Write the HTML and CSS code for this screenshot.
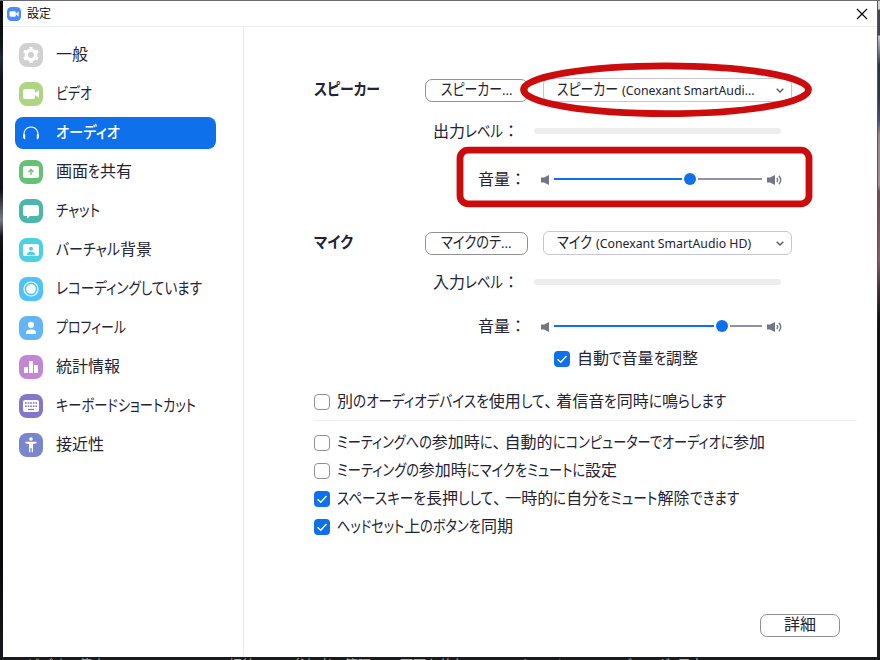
FILE: index.html
```
<!DOCTYPE html>
<html lang="ja">
<head>
    <meta charset="UTF-8">
    <meta name="viewport" content="width=device-width, initial-scale=1.0">
    <title>設定</title>
    <link rel="stylesheet" href="styles.css">
</head>
<body>
    <div class="window">
        <header class="titlebar">
            <svg class="app-logo" viewBox="0 0 14 14">
                <rect width="14" height="14" rx="4.5" fill="#4a8cff"/>
                <rect x="2.5" y="4.3" width="6.3" height="5.4" rx="1.3" fill="#fff"/>
                <path d="M9.2 6.3 11.6 4.6V9.4L9.2 7.7z" fill="#fff"/>
            </svg>
            <span class="title">設定</span>
            <svg class="close" viewBox="0 0 12 12"><path d="M1 1 11 11M11 1 1 11" stroke="#000" stroke-width="1.2"/></svg>
        </header>
        <div class="main">
            <nav class="sidebar">
                <a class="nav-item">
                    <svg class="nav-icon" viewBox="0 0 24 24">
                        <rect width="24" height="24" rx="8" fill="#d1d1d1"/>
                        <circle cx="12" cy="12" r="4.7" fill="none" stroke="#fff" stroke-width="3.4"/>
                        <path d="M12 4V7M12 17v3M5 8l3 1.7M16 14.3l3 1.7M5 16l3-1.7M16 9.7 19 8" stroke="#fff" stroke-width="3.4"/>
                    </svg>
                    <span class="nav-text">一般</span>
                </a>
                <a class="nav-item">
                    <svg class="nav-icon" viewBox="0 0 24 24">
                        <rect width="24" height="24" rx="8" fill="#aed581"/>
                        <rect x="4" y="7" width="12" height="10" rx="2" fill="#fff"/>
                        <path d="M16 11 20 8V16L16 13z" fill="#fff"/>
                    </svg>
                    <span class="nav-text" data-width="36">ビデオ</span>
                </a>
                <a class="nav-item active">
                    <svg class="nav-icon" viewBox="0 0 24 24">
                        <path d="M5.3 17C3.8 10.5 7 6 12 6s8.2 4.500 6.700 11" fill="none" stroke="#fff" stroke-width="1.1"/>
                        <path d="M4.1 13.2h2.100v5H5.200Q4 18 4 15zM19.900 13.200h-2.100v5h1Q20 18 20 15z" fill="#fff"/>
                    </svg>
                    <span class="nav-text" data-width="64">オーディオ</span>
                </a>
                <a class="nav-item">
                    <svg class="nav-icon" viewBox="0 0 24 24">
                        <rect width="24" height="24" rx="8" fill="#66c174"/>
                        <rect x="4" y="6" width="16" height="12" rx="2" fill="#fff"/>
                        <path d="M12 15V10M9.5 12 12 9.500 14.500 12" fill="none" stroke="#66c174" stroke-width="1.3"/>
                    </svg>
                    <span class="nav-text" data-width="76">画面を共有</span>
                </a>
                <a class="nav-item">
                    <svg class="nav-icon" viewBox="0 0 24 24">
                        <rect width="24" height="24" rx="8" fill="#4db6ac"/>
                        <path d="M6.5 6h11Q20 6 20 8.500v6Q20 17 17.500 17H11L8.500 19.500 8 17H6.500Q4 17 4 14.500v-6Q4 6 6.500 6z" fill="#fff"/>
                    </svg>
                    <span class="nav-text" data-width="44">チャット</span>
                </a>
                <a class="nav-item">
                    <svg class="nav-icon" viewBox="0 0 24 24">
                        <rect width="24" height="24" rx="8" fill="#4dd0e1"/>
                        <rect x="4" y="6" width="16" height="12" rx="2" fill="#fff"/>
                        <circle cx="12" cy="10.8" r="2" fill="#4dd0e1"/>
                        <path d="M8 17q0-3.2 4-3.200t4 3.200z" fill="#4dd0e1"/>
                    </svg>
                    <span class="nav-text" data-width="96">バーチャル背景</span>
                </a>
                <a class="nav-item">
                    <svg class="nav-icon" viewBox="0 0 24 24">
                        <rect width="24" height="24" rx="8" fill="#4fc3f7"/>
                        <circle cx="12" cy="12" r="7" fill="none" stroke="#fff" stroke-width="1.2"/>
                        <circle cx="12" cy="12" r="4.8" fill="#fff"/>
                    </svg>
                    <span class="nav-text" data-width="146">レコーディングしています</span>
                </a>
                <a class="nav-item">
                    <svg class="nav-icon" viewBox="0 0 24 24">
                        <rect width="24" height="24" rx="8" fill="#64b5f6"/>
                        <circle cx="12" cy="8.8" r="3.1" fill="#fff"/>
                        <path d="M7 18v-1.2q0-3.300 5-3.300t5 3.300V18z" fill="#fff"/>
                    </svg>
                    <span class="nav-text" data-width="70">プロフィール</span>
                </a>
                <a class="nav-item">
                    <svg class="nav-icon" viewBox="0 0 24 24">
                        <rect width="24" height="24" rx="8" fill="#c286d4"/>
                        <path d="M5 12h4v6H5zM10 6h4v12h-4zM15 10h4v8h-4z" fill="#fff"/>
                    </svg>
                    <span class="nav-text">統計情報</span>
                </a>
                <a class="nav-item">
                    <svg class="nav-icon" viewBox="0 0 24 24">
                        <rect width="24" height="24" rx="8" fill="#8476c9"/>
                        <rect x="4" y="6" width="16" height="12" rx="2" fill="#fff"/>
                        <path d="M6 9h12M6 12.2h12" stroke="#8476c9" stroke-width="1.5" stroke-dasharray="1.7 .9"/>
                        <path d="M9 15.5h6" stroke="#8476c9" stroke-width="1.2"/>
                    </svg>
                    <span class="nav-text" data-width="140">キーボードショートカット</span>
                </a>
                <a class="nav-item">
                    <svg class="nav-icon" viewBox="0 0 24 24">
                        <rect width="24" height="24" rx="8" fill="#7986cb"/>
                        <circle cx="12" cy="6" r="1.8" fill="#fff"/>
                        <path d="M6.5 8.700h11v1.600L14 11v8.300h-1.300V15h-1.400v4.300H10V11l-3.500-.7z" fill="#fff"/>
                    </svg>
                    <span class="nav-text">接近性</span>
                </a>
            </nav>

            <section class="content">
                <div class="device">
                    <h2><span data-width="66">スピーカー</span></h2>
                    <button class="btn"><span data-width="61">スピーカー</span><span class="dots">...</span></button>
                    <div class="select"><span data-width="61">スピーカー</span><span class="model">(Conexant SmartAudi...</span>
                        <svg class="chevron" viewBox="0 0 8 5"><path d="M.7.7 4 4 7.3.7" fill="none" stroke="#555566" stroke-width="1.3"/></svg>
                    </div>
                </div>
                <div class="level"><span class="label"><span data-width="70">出力レベル</span>：</span><div class="meter"></div></div>
                <div class="volume">
                    <span class="label">音量：</span>
                    <svg class="vol-low" viewBox="0 0 8 10"><path d="M0 2.5h3L8 0v10L3 7.500H0z" fill="#747487"/></svg>
                    <div class="slider"><div class="fill" style="width: 128px"></div><div class="thumb"></div><div class="rest"></div></div>
                    <svg class="vol-high" viewBox="0 0 15 12"><path d="M0 3.5h3L8 1v10L3 8.500H0z" fill="#747487"/><path d="M9.8 4q1.700 2 0 4M11.900 1.700q3.600 4.300 0 8.600" fill="none" stroke="#747487" stroke-width="1.4"/></svg>
                </div>

                <div class="device mic">
                    <h2><span data-width="39">マイク</span></h2>
                    <button class="btn"><span data-width="60">マイクのテ</span><span class="dots">...</span></button>
                    <div class="select"><span data-width="35">マイク</span><span class="model">(Conexant SmartAudio HD)</span>
                        <svg class="chevron" viewBox="0 0 8 5"><path d="M.7.7 4 4 7.3.7" fill="none" stroke="#555566" stroke-width="1.3"/></svg>
                    </div>
                </div>
                <div class="level mic-level"><span class="label"><span data-width="70">入力レベル</span>：</span><div class="meter"></div></div>
                <div class="volume mic-volume">
                    <span class="label">音量：</span>
                    <svg class="vol-low" viewBox="0 0 8 10"><path d="M0 2.5h3L8 0v10L3 7.500H0z" fill="#747487"/></svg>
                    <div class="slider"><div class="fill" style="width: 160px"></div><div class="thumb"></div><div class="rest"></div></div>
                    <svg class="vol-high" viewBox="0 0 15 12"><path d="M0 3.5h3L8 1v10L3 8.500H0z" fill="#747487"/><path d="M9.8 4q1.700 2 0 4M11.900 1.700q3.600 4.300 0 8.600" fill="none" stroke="#747487" stroke-width="1.4"/></svg>
                </div>
                <label class="check auto">
                    <svg class="box on" viewBox="0 0 16 16"><path d="M3.5 8.2 6.7 11.2 12.5 5"/></svg>
                    <span class="check-text" data-width="121">自動で音量を調整</span>
                </label>

                <div class="options ring">
                    <label class="check"><span class="box"></span><span class="check-text" data-width="389">別のオーディオデバイスを使用して、着信音を同時に鳴らします</span></label>
                </div>
                <div class="options">
                    <label class="check"><span class="box"></span><span class="check-text" data-width="428">ミーティングへの参加時に、自動的にコンピューターでオーディオに参加</span></label>
                    <label class="check"><span class="box"></span><span class="check-text" data-width="280">ミーティングの参加時にマイクをミュートに設定</span></label>
                    <label class="check"><svg class="box on" viewBox="0 0 16 16"><path d="M3.5 8.2 6.7 11.2 12.5 5"/></svg><span class="check-text" data-width="402">スペースキーを長押しして、一時的に自分をミュート解除できます</span></label>
                    <label class="check"><svg class="box on" viewBox="0 0 16 16"><path d="M3.5 8.2 6.7 11.2 12.5 5"/></svg><span class="check-text" data-width="176">ヘッドセット上のボタンを同期</span></label>
                </div>
                <button class="btn advanced">詳細</button>
            </section>
        </div>
    </div>

    <!-- meeting toolbar showing below the window -->
    <div class="toolbar">
        <span class="tool-video">ビデオの停止</span>
        <span class="tool-invite">招待</span>
        <span class="tool-people">参加者の管理</span>
        <span class="tool-share">画面を共有</span>
        <span class="tool-chat">チャット</span>
        <span class="tool-record">レコーディング</span>
        <span class="tool-react">反応</span>
    </div>

    <svg class="marks" viewBox="0 0 880 660">
        <ellipse cx="666" cy="89.8" rx="142.5" ry="23.9"/>
        <rect x="460" y="150.2" width="349" height="53.6" rx="8"/>
    </svg>
    <script src="kana.js"></script>
</body>
</html>
```

FILE: kana.js
```
// Condense the kana runs of a label so that it fits its data-width; kanji keep their width
document.querySelectorAll('[data-width]').forEach(label => {
    const runs = label.textContent.match(/[ぁ-んァ-ヶー]+|、|[^ぁ-んァ-ヶー、]+/g);
    label.textContent = '';
    let kana = 0;
    let rest = 0;

    const spans = runs.map(run => {
        const span = document.createElement('span');
        span.textContent = run;
        span.className = run === '、' ? 'comma' : /^[ぁ-んァ-ヶー]/.test(run) ? 'kana' : 'kanji';
        label.appendChild(span);
        return span;
    });

    const widths = spans.map(span => span.getBoundingClientRect().width);
    spans.forEach((span, i) => {
        if (span.className === 'kana') kana += widths[i];
        else rest += widths[i];
    });

    const scale = (Number(label.dataset.width) - rest) / kana;
    spans.forEach((span, i) => {
        if (span.className !== 'kana') return;
        span.style.width = widths[i] * scale + 'px';
        span.style.transform = `scaleX(${scale})`;
    });
});
```

FILE: styles.css
```
* {
    box-sizing: border-box;
}
body {
    margin: 0;
    width: 880px;
    height: 660px;
    overflow: hidden;
    position: relative;
    padding: 1px 3px 0;
    background: linear-gradient(#6b6b70, #6b6b70) 0 0 / 880px 1px no-repeat,
        linear-gradient(#08080a 0, #10141c 45px, #1c2a38 58px, #10141c 80px, #101116 190px, #777b85 220px, #16171b 236px, #08080a 260px, #08080a 560px, #18191c 660px) 0 0 / 3px 660px no-repeat,
        linear-gradient(#55555a 0, #55555a 270px, #1b1b1d 330px, #1b1c1e 660px) 877px 0 / 1px 660px no-repeat,
        linear-gradient(#d5d5d8 0, #d5d5d8 9px, #45454b 10px, #45454b 35px, #c5c8cc 36px, #8b9096 48px, #2c3440 65px, #303848 100px, #46506c 120px, #96888f 135px, #a09095 185px, #6d4c54 192px, #805f66 260px, #3c3034 290px, #111 320px, #161416 620px, #1b1c1e 660px) 878px 0 / 2px 660px no-repeat,
        #191b1c;
    font-family: "Noto Sans CJK JP", sans-serif;
    font-size: 16px;
    color: #232333;
}
.kana {
    display: inline-block;
    white-space: nowrap;
    transform-origin: 0 50%;
    font-feature-settings: "palt";
}
.comma {
    letter-spacing: -4px;
}
.window {
    width: 874px;
    height: 656px;
    background: #fff;
    display: flex;
    flex-direction: column;
}
.titlebar {
    height: 26px;
    border-bottom: 1px solid #ededf4;
    display: flex;
    align-items: center;
    padding: 0 9px 0 4px;
    color: #000;
}
.app-logo {
    width: 14px;
    height: 14px;
}
.title {
    margin-left: 6px;
    padding-bottom: 2px;
    font-size: 12px;
    font-weight: 350;
    line-height: 22px;
}
.close {
    width: 12px;
    height: 12px;
    margin-left: auto;
}
.main {
    flex: 1;
    display: flex;
}
.sidebar {
    width: 241px;
    border-right: 1px solid #ededed;
    padding: 12px 0 0 12px;
    display: flex;
    flex-direction: column;
    gap: 7px;
}
.nav-item {
    width: 201px;
    height: 32px;
    flex-shrink: 0;
    border-radius: 8px;
    display: flex;
    align-items: center;
    padding-left: 4px;
    white-space: nowrap;
}
.nav-text {
    margin-left: 13px;
    line-height: 28px;
    height: 32px;
}
.nav-icon {
    width: 24px;
    height: 24px;
    flex-shrink: 0;
}
.active {
    background: #0e71eb;
    color: #fff;
    font-weight: 500;
}
.content {
    flex: 1;
    padding: 51px 20px 0 70px;
    display: flex;
    flex-direction: column;
    white-space: nowrap;
}
.device {
    height: 24px;
    display: flex;
    flex-shrink: 0;
    align-items: flex-end;
}
h2 {
    margin: 0;
    width: 111px;
    height: 24px;
    font-size: 16px;
    font-weight: 700;
    line-height: 20px;
}
.btn {
    width: 103px;
    height: 23px;
    padding: 0 0 0 15px;
    display: flex;
    align-items: flex-start;
    border: 1px solid #909096;
    border-radius: 7px;
    background: #fff;
    color: #232333;
    font: inherit;
    line-height: 17px;
    white-space: nowrap;
}
.dots {
    font-family: "Noto Sans", sans-serif;
    font-size: 13px;
    line-height: 20px;
}
.select {
    width: 249px;
    height: 24px;
    margin-left: 15px;
    border: 1px solid #c6c6d8;
    border-radius: 6px;
    padding: 0 7px 0 13px;
    display: flex;
    align-items: flex-start;
    line-height: 19px;
}
.model {
    font-family: "Noto Sans", sans-serif;
    font-size: 12.3px;
    margin-left: 4px;
    line-height: 23px;
}
.chevron {
    width: 8px;
    height: 5px;
    margin: 9px 0 0 auto;
}
.level {
    height: 20px;
    margin-top: 19px;
    display: flex;
    flex-shrink: 0;
    align-items: center;
    padding-left: 119px;
}
.level .label {
    width: 101px;
}
.label {
    height: 20px;
    line-height: 18px;
}
.meter {
    width: 247px;
    height: 6px;
    border-radius: 3px;
    background: #ededed;
}
.volume {
    height: 20px;
    margin-top: 28px;
    display: flex;
    flex-shrink: 0;
    align-items: center;
    padding-left: 164px;
}
.volume .label {
    width: 63px;
}
.vol-low {
    width: 8px;
    height: 10px;
    margin: 2px 5px 0 0;
}
.slider {
    width: 208px;
    display: flex;
    align-items: center;
}
.fill {
    height: 2px;
    background: #0e71eb;
}
.thumb {
    width: 12px;
    height: 12px;
    border-radius: 50%;
    background: #0e71eb;
    margin: 0 2px;
}
.rest {
    flex: 1;
    height: 2px;
    background: #9090ac;
}
.vol-high {
    width: 15px;
    height: 12px;
    margin: 2px 0 0 5px;
}
.mic {
    margin-top: 42px;
}
.mic-level {
    margin-top: 17px;
}
.mic-volume {
    margin-top: 24px;
}
.check {
    height: 16px;
    display: flex;
    align-items: center;
}
.box {
    width: 16px;
    height: 16px;
    flex-shrink: 0;
    border: 1px solid #909096;
    border-radius: 4px;
    margin-right: 7px;
}
.box.on {
    border: 0;
    background: #0e71eb;
    fill: none;
    stroke: #fff;
    stroke-width: 1.4;
}
.check-text {
    height: 16px;
    line-height: 13px;
}
.auto {
    margin: 15px 0 0 240px;
}
.options {
    display: flex;
    flex-direction: column;
    gap: 12px;
    padding-top: 14px;
}
.ring {
    margin-top: 27px;
    padding: 0 0 10px;
    border-bottom: 1px solid #ededf4;
}
.advanced {
    width: 80px;
    margin: 79px 17px 0 auto;
    padding: 0;
    justify-content: center;
    flex-shrink: 0;
}
.toolbar {
    height: 3px;
    overflow: hidden;
    font-size: 13px;
    line-height: 13px;
    color: #a9adae;
    white-space: nowrap;
    display: flex;
    padding-left: 24px;
}
.tool-video { width: 202px; }
.tool-invite { width: 64px; }
.tool-people { width: 107px; }
.tool-share { width: 116px; }
.tool-chat { width: 64px; }
.tool-record { width: 97px; }

/* hand-drawn highlights over the speaker controls */
.marks {
    position: absolute;
    left: 0;
    top: 0;
    width: 880px;
    height: 660px;
    fill: none;
    stroke: #cc0c0c;
    stroke-width: 6.8;
    pointer-events: none;
}
```
